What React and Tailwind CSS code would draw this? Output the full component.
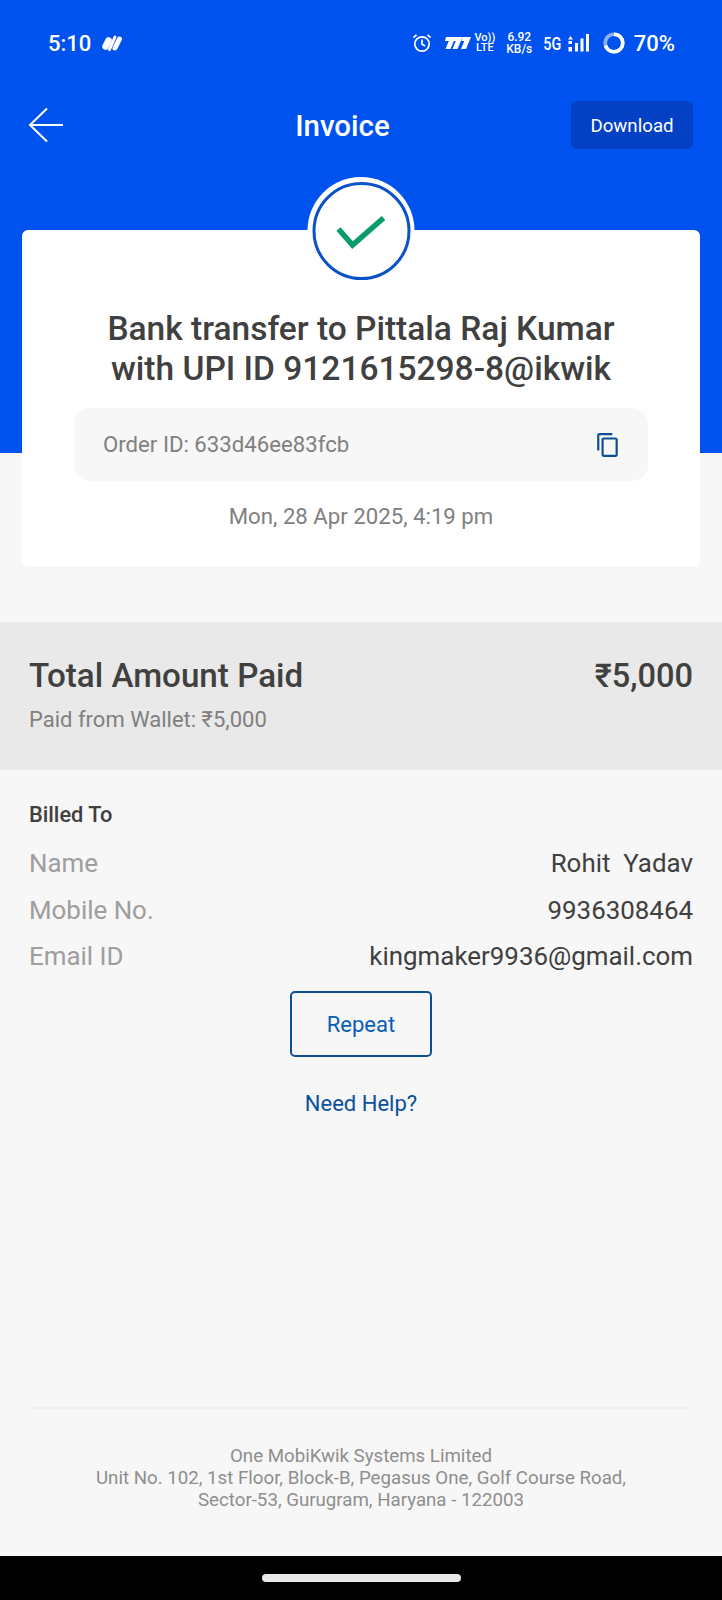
// Carrier mark in the status bar
const CarrierLogo = () => (
  <svg width="28" height="14" viewBox="0 0 28 14" fill="#fff">
    <path d="M3 1h9.500L7.500 13H2.500l3.300-8H2z" />
    <path d="M11 1h8.500l-5 12H9.500l3.300-8h-3z" />
    <path d="M19.500 1H28l-5 12h-5l3.300-8h-3z" />
  </svg>
);

const AppLogo = () => (
  <svg width="22" height="18" viewBox="0 0 22 18" fill="none" stroke="#fff" strokeLinecap="round">
    <path d="M4.500 12.500 7.500 6.500" strokeWidth="6.500" />
    <path d="M8.500 15.500 14 3" strokeWidth="3" />
    <path d="M14 14 18.500 5" strokeWidth="5" />
  </svg>
);

const AlarmIcon = () => (
  <svg width="20" height="20" viewBox="0 0 20 20" fill="none" stroke="#fff" strokeWidth="1.700">
    <circle cx="10" cy="11" r="7.200" />
    <path d="M10 6.500V11l3 2M1.500 4.500 4.500 1.800M18.500 4.500l-3-2.700" />
  </svg>
);

const SignalIcon = () => (
  <svg width="22" height="20" viewBox="0 0 22 20" fill="#fff">
    <path d="M2.500 3 5 6.500H0z" />
    <rect x="0.500" y="8" width="3.500" height="3" />
    <rect x="0.500" y="14" width="3.500" height="4.500" />
    <rect x="7" y="10" width="3" height="8.500" />
    <rect x="12.500" y="5.500" width="3" height="13" />
    <rect x="18" y="1" width="3" height="17.500" />
  </svg>
);

const BatteryRing = () => (
  <svg width="22" height="22" viewBox="0 0 22 22" fill="none" strokeWidth="3.600">
    <circle cx="11" cy="11" r="8.800" stroke="#8fb2f5" />
    <circle cx="11" cy="11" r="8.800" stroke="#fff" strokeDasharray="38.700 55.300" transform="rotate(-90 11 11)" />
  </svg>
);

const BackArrow = () => (
  <svg width="36" height="36" viewBox="0 0 36 36" fill="none" stroke="#fff" strokeWidth="2">
    <path d="M35 18H2M19 1.500 2 18l17 16.500" />
  </svg>
);

const CopyIcon = () => (
  <svg width="26" height="26" viewBox="0 0 24 24" fill="#0b4f94">
    <path d="M16 1H4c-1.100 0-2 .9-2 2v14h2V3h12V1zm3 4H8c-1.100 0-2 .9-2 2v14c0 1.100.9 2 2 2h11c1.100 0 2-.9 2-2V7c0-1.100-.9-2-2-2zm0 16H8V7h11v14z" />
  </svg>
);

const billedTo = [
  { label: "Name", value: "Rohit\u00a0 Yadav" },
  { label: "Mobile No.", value: "9936308464" },
  { label: "Email ID", value: "kingmaker9936@gmail.com" },
];

const App = () => {
  return (
    <div className="flex h-[1600px] flex-col overflow-hidden bg-[#f7f7f7] font-['Roboto',sans-serif]">
      {/* Cabecera azul */}
      <header className="h-[453px] shrink-0 bg-[#0052ee] text-white">
        <div className="flex h-[86px] items-center justify-between pl-[48px] pr-[47px]">
          <div className="flex items-center gap-[10px]">
            <span className="text-[22px] font-medium">5:10</span>
            <AppLogo />
          </div>
          <div className="flex items-center">
            <AlarmIcon />
            <span className="ml-[11px]">
              <CarrierLogo />
            </span>
            <div className="ml-[3px] flex flex-col items-center text-[11px] font-medium leading-[10px]">
              <span>Vo))</span>
              <span>LTE</span>
            </div>
            <div className="ml-[11px] flex flex-col items-center text-[12px] font-medium leading-[12px]">
              <span>6.92</span>
              <span>KB/s</span>
            </div>
            <span className="ml-[9px] inline-block scale-x-[0.8] text-[18px] font-medium">5G</span>
            <span className="ml-[4px]">
              <SignalIcon />
            </span>
            <span className="ml-[13px]">
              <BatteryRing />
            </span>
            <span className="ml-[9px] text-[22px] font-medium">70%</span>
          </div>
        </div>

        <div className="mt-[15px] flex h-[48px] items-center justify-between pl-[28px] pr-[29px]">
          <BackArrow />
          <h1 className="ml-[50px] pt-[3px] text-[29.5px] font-medium">Invoice</h1>
          <button className="h-[48px] w-[122px] rounded-md bg-[#0440c4] pt-[2px] text-[18.7px]">Download</button>
        </div>

        {/* Tarjeta de la transacción */}
        <section className="relative mx-[22px] mt-[81px] h-[336px] rounded-md bg-white pt-[79px]">
          <div className="absolute left-1/2 top-[-53px] flex h-[107px] w-[107px] -translate-x-1/2 items-center justify-center rounded-full bg-white">
            <div className="flex h-[98px] w-[98px] items-center justify-center rounded-full border-[3px] border-[#0b52c8]">
              <svg className="mr-[2px] mt-[4px]" width="50" height="36" viewBox="0 0 50 36" fill="none" stroke="#0a9b6a" strokeWidth="5.500">
                <path d="M3 14l14 16L48 3" />
              </svg>
            </div>
          </div>
          <h2 className="text-center text-[33.5px] font-medium leading-[40px] text-[#404040]">
            Bank transfer to Pittala Raj Kumar
            <br />
            with UPI ID 9121615298-8@ikwik
          </h2>
          <div className="mx-[52px] mt-[19px] flex h-[73px] items-center justify-between rounded-2xl bg-[#f7f7f7] pl-[29px] pr-[27px]">
            <span className="pt-[1px] text-[22.2px] text-[#808080]">Order ID: 633d46ee83fcb</span>
            <CopyIcon />
          </div>
          <p className="mt-[23px] text-center text-[22.2px] leading-[24px] text-[#808080]">Mon, 28 Apr 2025, 4:19 pm</p>
        </section>
      </header>

      {/* Total pagado */}
      <section className="mt-[169px] h-[148px] bg-[#e9e9e9] px-[29px] pt-[34px]">
        <div className="flex items-center justify-between font-medium leading-[40px] text-[#404040]">
          <span className="text-[33.2px]">Total Amount Paid</span>
          <span className="text-[32.6px]">₹5,000</span>
        </div>
        <p className="mt-[12px] text-[22px] leading-[24px] text-[#808080]">Paid from Wallet: ₹5,000</p>
      </section>

      {/* Datos de facturación */}
      <section className="px-[29px] pt-[33px]">
        <h3 className="text-[21.8px] font-medium leading-[24px] text-[#404040]">Billed To</h3>
        <dl className="mt-[21px] flex flex-col gap-[16.5px]">
          {billedTo.map((row) => (
            <div key={row.label} className="flex items-center justify-between text-[25.9px] leading-[30px]">
              <dt className="text-[#9e9e9e]">{row.label}</dt>
              <dd className="text-[#404040]">{row.value}</dd>
            </div>
          ))}
        </dl>
      </section>

      <div className="mt-[20px] flex flex-col items-center">
        <button className="h-[66px] w-[142px] rounded-[5px] border-2 border-[#0d4f94] text-[22px] text-[#0b5cb8]">Repeat</button>
        <a className="mt-[34px] text-[22px] leading-[26px] text-[#0a4f9a]">Need Help?</a>
      </div>

      {/* Dirección */}
      <footer className="mx-[30px] mt-auto border-t-2 border-[#efefef] pb-[45px] pt-[36px] text-center text-[18.7px] leading-[22px] text-[#8e8e8e]">
        <p>One MobiKwik Systems Limited</p>
        <p>Unit No. 102, 1st Floor, Block-B, Pegasus One, Golf Course Road,</p>
        <p>Sector-53, Gurugram, Haryana - 122003</p>
      </footer>

      {/* Barra de navegación del sistema */}
      <div className="flex h-[44px] shrink-0 items-start justify-center bg-black pt-[18px]">
        <div className="h-[8px] w-[199px] rounded-full bg-[#e8e8e8]" />
      </div>
    </div>
  );
};

export default App;
